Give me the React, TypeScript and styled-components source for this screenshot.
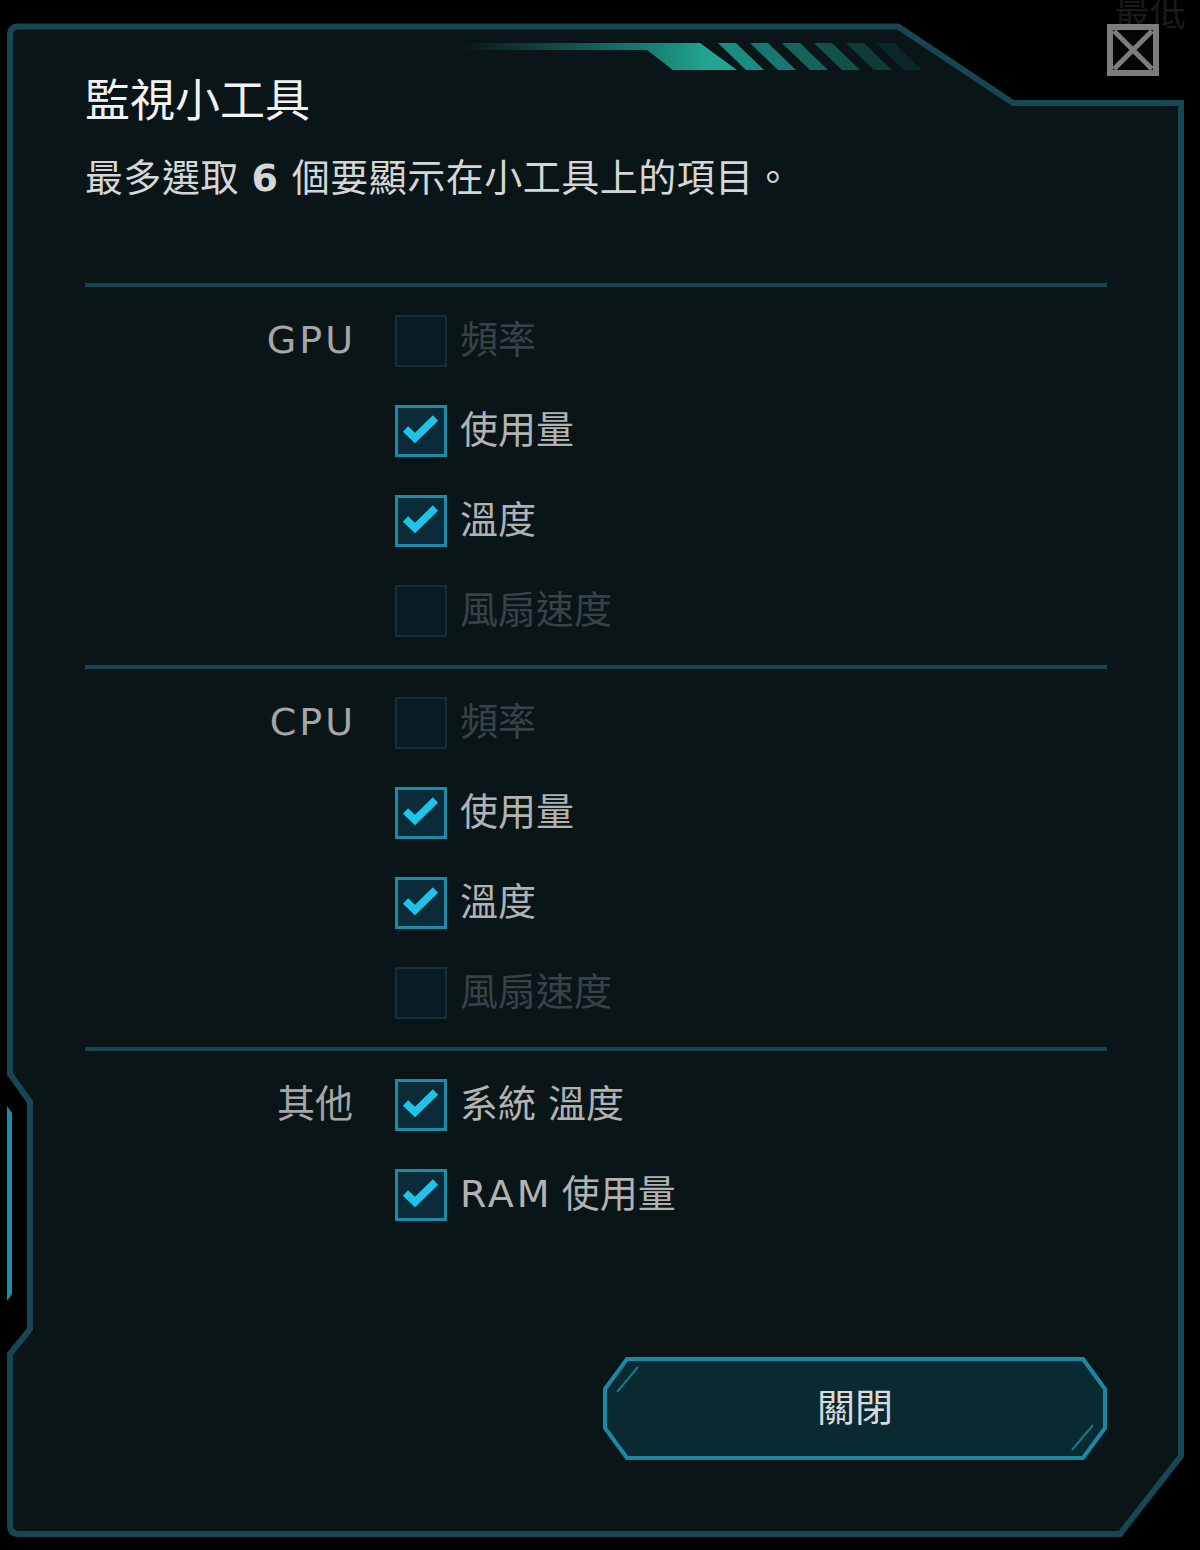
import React from "react";
import styled, { createGlobalStyle } from "styled-components";

const GlobalStyle = createGlobalStyle`
  html, body {
    margin: 0;
    padding: 0;
    background: #000;
  }
  body {
    font-family: "DejaVu Sans", "Noto Sans CJK TC", sans-serif;
  }
`;

const Page = styled.div`
  position: relative;
  width: 1200px;
  height: 1550px;
  background: #000;
  overflow: hidden;
`;

const GhostText = styled.div`
  position: absolute;
  left: 1114px;
  top: -10px;
  font-size: 36px;
  line-height: 48px;
  color: #1a1a1a;
  white-space: nowrap;
`;

const CloseIcon = styled.svg`
  position: absolute;
  left: 1107px;
  top: 24px;
  width: 52px;
  height: 52px;
`;

const Panel = styled.div`
  position: relative;
  margin: 24px 0 0 8px;
  width: 1177px;
  height: 1514px;
  box-sizing: border-box;
  padding: 52px 78px 0 77px;
`;

const Frame = styled.svg`
  position: absolute;
  left: 0;
  top: 0;
  width: 1177px;
  height: 1514px;
  overflow: visible;
`;

const Content = styled.div`
  position: relative;
  display: flex;
  flex-direction: column;
`;

const Title = styled.h1`
  margin: 0;
  font-size: 45px;
  line-height: 52px;
  font-weight: 400;
  color: #f2f2f2;
`;

const Subtitle = styled.p`
  margin: 27px 0 0;
  font-size: 38px;
  line-height: 46px;
  letter-spacing: 0.5px;
  color: #d6d6d6;
`;

const Num = styled.span`
  font-weight: 700;
  letter-spacing: 1px;
`;

const Divider = styled.div<{ $gap: number }>`
  height: 4px;
  margin-top: ${(p) => p.$gap}px;
  background: #174652;
`;

const Section = styled.div`
  display: flex;
  padding: 9px 0;
`;

const GroupLabel = styled.div`
  width: 268px;
  margin-right: 42px;
  height: 90px;
  display: flex;
  align-items: center;
  justify-content: flex-end;
  font-size: 38px;
  line-height: 1.2;
  color: #a6a6a6;
`;

const Latin = styled.span`
  letter-spacing: 3px;
  margin-right: -3px;
`;

const Items = styled.div`
  display: flex;
  flex-direction: column;
`;

const Row = styled.div`
  height: 90px;
  display: flex;
  align-items: center;
`;

const Box = styled.span<{ $on: boolean }>`
  width: 52px;
  height: 52px;
  box-sizing: border-box;
  flex: none;
  border: ${(p) => (p.$on ? "3px solid #1b8ba8" : "2px solid #12313b")};
  background: ${(p) => (p.$on ? "#0b2b39" : "#0a1c23")};
  display: flex;
  align-items: center;
  justify-content: center;
`;

const ItemText = styled.span<{ $on: boolean }>`
  margin-left: 13px;
  font-size: 38px;
  line-height: 1.2;
  color: ${(p) => (p.$on ? "#b2b2b2" : "#384246")};
  white-space: pre;
`;

const CloseButton = styled.button`
  position: relative;
  align-self: flex-end;
  margin-top: 108px;
  width: 504px;
  height: 103px;
  padding: 0;
  border: 0;
  background: none;
  font-family: inherit;
  font-size: 38px;
  color: #dadada;
  cursor: pointer;
  display: flex;
  align-items: center;
  justify-content: center;
`;

const ButtonFrame = styled.svg`
  position: absolute;
  left: 0;
  top: 0;
  width: 504px;
  height: 103px;
`;

const ButtonText = styled.span`
  position: relative;
  line-height: 1.2;
`;

type Item = { label: React.ReactNode; on: boolean };
type Group = { name: React.ReactNode; items: Item[] };

const groups: Group[] = [
  {
    name: <Latin>GPU</Latin>,
    items: [
      { label: "頻率", on: false },
      { label: "使用量", on: true },
      { label: "溫度", on: true },
      { label: "風扇速度", on: false },
    ],
  },
  {
    name: <Latin>CPU</Latin>,
    items: [
      { label: "頻率", on: false },
      { label: "使用量", on: true },
      { label: "溫度", on: true },
      { label: "風扇速度", on: false },
    ],
  },
  {
    name: "其他",
    items: [
      { label: "系統 溫度", on: true },
      {
        label: (
          <>
            <Latin>RAM</Latin> 使用量
          </>
        ),
        on: true,
      },
    ],
  },
];

function Check({ on }: { on: boolean }) {
  return (
    <Box $on={on}>
      {on && (
        <svg width="46" height="46" viewBox="3 3 46 46">
          <path
            d="M10.5 24 L20 33 L40.5 13"
            fill="none"
            stroke="#1ec3ea"
            strokeWidth="7.5"
          />
        </svg>
      )}
    </Box>
  );
}

const stripes = [718, 750, 782, 814, 846, 876];

export default function App() {
  return (
    <Page>
      <GlobalStyle />
      <GhostText>最低</GhostText>
      <Panel>
        <Frame viewBox="0 0 1177 1514">
          <defs>
            <linearGradient id="bar" x1="452" y1="0" x2="700" y2="0" gradientUnits="userSpaceOnUse">
              <stop offset="0" stopColor="#1d9686" stopOpacity="0" />
              <stop offset="0.75" stopColor="#1d9686" stopOpacity="0.8" />
              <stop offset="1" stopColor="#22a592" />
            </linearGradient>
          </defs>
          <path
            d="M2 11 Q2 2.5 11 2.5 L890 2.5 L1005 79 L1173 79 L1173 1432 L1112 1510 L11 1510 Q2 1510 2 1501 L2 1330 L22 1305 L22 1078 L2 1050 Z"
            fill="#0a1518"
            stroke="#174753"
            strokeWidth="6"
          />
          <polygon points="-1,1082 4,1089 4,1270 -1,1277" fill="#1590ab" />
          <polygon points="452,19 692,19 729,46 665,46 639,26 452,26" fill="url(#bar)" />
          {stripes.map((x, i) => (
            <polygon
              key={x}
              points={`${x - 8},19 ${x + 10},19 ${x + 38},46 ${x + 20},46`}
              fill="#1c9384"
              opacity={0.95 - i * 0.16}
            />
          ))}
        </Frame>
        <Content>
          <Title>監視小工具</Title>
          <Subtitle>
            最多選取 <Num>6</Num> 個要顯示在小工具上的項目。
          </Subtitle>
          {groups.map((g, gi) => (
            <React.Fragment key={gi}>
              <Divider $gap={gi === 0 ? 82 : 0} />
              <Section>
                <GroupLabel>{g.name}</GroupLabel>
                <Items>
                  {g.items.map((it, ii) => (
                    <Row key={ii}>
                      <Check on={it.on} />
                      <ItemText $on={it.on}>{it.label}</ItemText>
                    </Row>
                  ))}
                </Items>
              </Section>
            </React.Fragment>
          ))}
          <CloseButton>
            <ButtonFrame viewBox="0 0 504 103">
              <path
                d="M24 2 L480 2 L502 32 L502 71 L480 101 L24 101 L2 71 L2 32 Z"
                fill="#0a2a32"
                stroke="#1b89a4"
                strokeWidth="4"
              />
              <path d="M35 10 L14 35" stroke="#1b89a4" strokeWidth="2" opacity="0.8" />
              <path d="M490 68 L469 93" stroke="#1b89a4" strokeWidth="2" opacity="0.8" />
            </ButtonFrame>
            <ButtonText>關閉</ButtonText>
          </CloseButton>
        </Content>
      </Panel>
      <CloseIcon viewBox="0 0 52 52">
        <rect x="3" y="3" width="46" height="46" fill="#050505" stroke="#7c7c7c" strokeWidth="6" />
        <path d="M7 7 L45 45 M45 7 L7 45" stroke="#7c7c7c" strokeWidth="5" />
      </CloseIcon>
    </Page>
  );
}
